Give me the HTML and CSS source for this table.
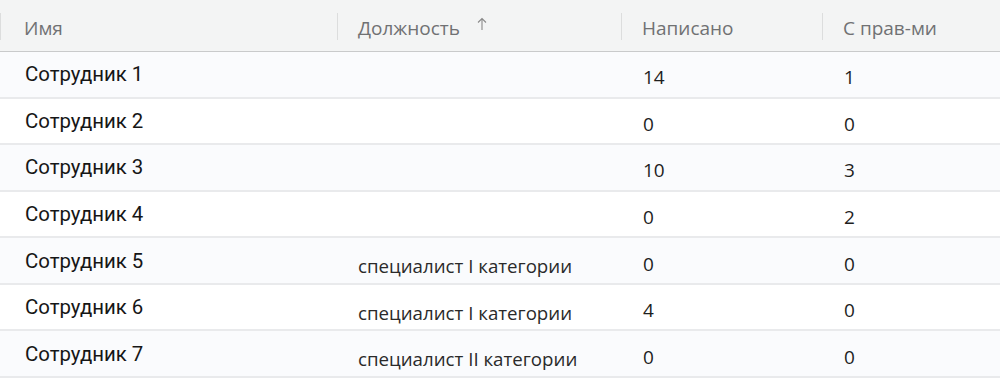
FILE: index.html
```html
<!DOCTYPE html>
<html lang="ru">
<head>
<meta charset="utf-8">
<title>Сотрудники</title>
<link rel="stylesheet" href="styles.css">
</head>
<body>
<div class="table">
  <div class="head">
    <div class="hcell first">Имя</div>
    <div class="hcell">Должность
      <svg class="sort" width="10" height="14" viewBox="0 0 10 14"><path d="M5 13V1.5M1 5.5L5 1.5L9 5.5" fill="none" stroke="#8a8a8a" stroke-width="1.1"/></svg>
    </div>
    <div class="hcell">Написано</div>
    <div class="hcell">С прав-ми</div>
  </div>
  <div class="row odd"><div class="cell name">Сотрудник 1</div><div class="cell pos"></div><div class="cell num">14</div><div class="cell num">1</div></div>
  <div class="row"><div class="cell name">Сотрудник 2</div><div class="cell pos"></div><div class="cell num">0</div><div class="cell num">0</div></div>
  <div class="row odd"><div class="cell name">Сотрудник 3</div><div class="cell pos"></div><div class="cell num">10</div><div class="cell num">3</div></div>
  <div class="row"><div class="cell name">Сотрудник 4</div><div class="cell pos"></div><div class="cell num">0</div><div class="cell num">2</div></div>
  <div class="row odd"><div class="cell name">Сотрудник 5</div><div class="cell pos">специалист I категории</div><div class="cell num">0</div><div class="cell num">0</div></div>
  <div class="row"><div class="cell name">Сотрудник 6</div><div class="cell pos">специалист I категории</div><div class="cell num">4</div><div class="cell num">0</div></div>
  <div class="row odd"><div class="cell name">Сотрудник 7</div><div class="cell pos">специалист II категории</div><div class="cell num">0</div><div class="cell num">0</div></div>
</div>
</body>
</html>
```

FILE: styles.css
```css
html, body {
  margin: 0;
  padding: 0;
  background: #ffffff;
}
.table {
  width: 1000px;
}
.head, .row {
  display: grid;
  grid-template-columns: 337px 284px 201px 1fr;
}
.head {
  height: 52px;
  box-sizing: border-box;
  background: #f3f4f4;
  border-bottom: 1px solid #c9cacb;
}
.hcell {
  display: flex;
  align-items: center;
  padding-left: 21px;
  padding-top: 4px;
  font-family: "Open Sans", "Noto Sans", sans-serif;
  font-size: 19px;
  color: #707173;
  position: relative;
}
.hcell.first {
  padding-left: 24px;
}
.hcell::before {
  content: "";
  position: absolute;
  left: 0;
  top: 13px;
  height: 27px;
  width: 1px;
  background: #dcdddd;
}
.sort {
  margin-left: 17px;
  margin-top: -8px;
}
.row {
  height: 46.57px;
  box-sizing: border-box;
  border-bottom: 2px solid #e9eaec;
  background: #ffffff;
}
.row.odd {
  background: #fafbfd;
}
.cell {
  display: flex;
  align-items: center;
  padding-left: 22px;
  color: #1b1b1b;
}
.cell.name {
  padding-left: 25px;
  font-family: Roboto, "Noto Sans", sans-serif;
  font-size: 20.4px;
  color: #161616;
}
.cell.pos {
  padding-left: 21px;
  padding-top: 10px;
  font-family: "Open Sans", "Noto Sans", sans-serif;
  font-size: 18.7px;
  color: #2a2a2a;
}
.cell.num {
  padding-top: 6px;
  font-family: "Open Sans", "Noto Sans", sans-serif;
  font-size: 19px;
  color: #1e1e1e;
}
```
